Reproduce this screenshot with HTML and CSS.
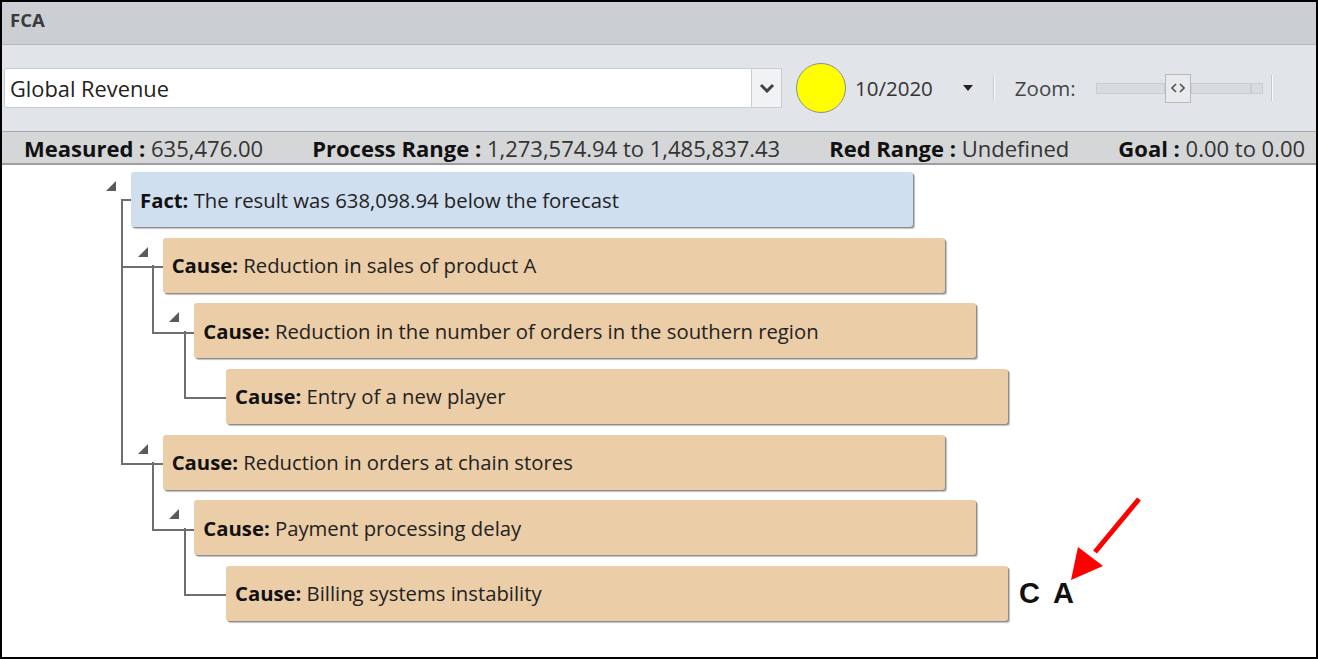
FILE: index.html
```html
<!DOCTYPE html>
<html lang="en">
<head>
    <meta charset="UTF-8">
    <title>FCA</title>
    <link rel="stylesheet" href="styles.css">
</head>
<body>
    <div class="window">
        <div class="titlebar">FCA</div>

        <div class="toolbar">
            <div class="combo">
                <span class="combo-text">Global Revenue</span>
                <span class="combo-btn">
                    <svg width="16" height="10" viewBox="0 0 16 10"><polyline points="2,2 8,8 14,2" fill="none" stroke="#444" stroke-width="3"/></svg>
                </span>
            </div>
            <span class="status-dot"></span>
            <span class="period">10/2020</span>
            <svg class="period-arrow" width="10" height="6" viewBox="0 0 10 6"><polygon points="0,0 10,0 5,6" fill="#222"/></svg>
            <span class="sep"></span>
            <span class="zoom-label">Zoom:</span>
            <div class="slider">
                <span class="track track-left"></span>
                <span class="thumb">
                    <svg width="14" height="10" viewBox="0 0 14 10"><polyline points="5,1 1,5 5,9" fill="none" stroke="#555" stroke-width="1.6"/><polyline points="9,1 13,5 9,9" fill="none" stroke="#555" stroke-width="1.6"/></svg>
                </span>
                <span class="track track-right"></span>
                <span class="track track-end"></span>
            </div>
            <span class="sep"></span>
        </div>

        <div class="stats">
            <span><b>Measured :</b> 635,476.00</span>
            <span><b>Process Range :</b> 1,273,574.94 to 1,485,837.43</span>
            <span><b>Red Range :</b> Undefined</span>
            <span><b>Goal :</b> 0.00 to 0.00</span>
        </div>

        <div class="canvas">
            <ul class="tree">
                <li class="root">
                    <div class="node fact has-kids"><b>Fact:</b>&nbsp;The result was 638,098.94 below the forecast</div>
                    <ul>
                        <li>
                            <div class="node has-kids"><b>Cause:</b>&nbsp;Reduction in sales of product A</div>
                            <ul>
                                <li>
                                    <div class="node has-kids"><b>Cause:</b>&nbsp;Reduction in the number of orders in the southern region</div>
                                    <ul>
                                        <li>
                                            <div class="node"><b>Cause:</b>&nbsp;Entry of a new player</div>
                                        </li>
                                    </ul>
                                </li>
                            </ul>
                        </li>
                        <li>
                            <div class="node has-kids"><b>Cause:</b>&nbsp;Reduction in orders at chain stores</div>
                            <ul>
                                <li>
                                    <div class="node has-kids"><b>Cause:</b>&nbsp;Payment processing delay</div>
                                    <ul>
                                        <li class="row">
                                            <div class="node"><b>Cause:</b>&nbsp;Billing systems instability</div>
                                            <span class="mark">C A</span>
                                        </li>
                                    </ul>
                                </li>
                            </ul>
                        </li>
                    </ul>
                </li>
            </ul>
        </div>

        <!-- annotation arrow pointing at the C A mark -->
        <svg class="arrow" width="90" height="100" viewBox="0 0 90 100">
            <line x1="77" y1="8" x2="33" y2="61" stroke="#ff0000" stroke-width="5"/>
            <polygon points="9,89 16,56 41,75" fill="#ff0000"/>
        </svg>
    </div>
</body>
</html>
```

FILE: styles.css
```css
* {
    box-sizing: border-box;
}
body {
    margin: 0;
    font-family: "Open Sans", "Noto Sans", sans-serif;
    color: #222;
}
.window {
    position: relative;
    width: 1318px;
    height: 659px;
    border: 2px solid #000;
    display: flex;
    flex-direction: column;
    background: #fff;
    overflow: hidden;
}
.titlebar {
    height: 43px;
    background: #cbcfd4;
    border-bottom: 1px solid #b4b8bd;
    padding: 5px 0 0 8px;
    font-weight: bold;
    font-size: 18.5px;
    color: #3b3b3b;
}

/* toolbar */
.toolbar {
    height: 86px;
    background: #e1e4e8;
    display: flex;
    align-items: center;
    padding-left: 2px;
}
.combo {
    display: flex;
    height: 40px;
    width: 778px;
}
.combo-text {
    flex: 1;
    background: #fff;
    border: 1px solid #c8cbcf;
    border-radius: 2px 0 0 2px;
    padding-left: 5px;
    display: flex;
    align-items: center;
    font-size: 21.8px;
    color: #222;
}
.combo-btn {
    width: 30px;
    background: #f1f2f4;
    border: 1px solid #c8cbcf;
    border-left: none;
    display: flex;
    align-items: center;
    justify-content: center;
}
.status-dot {
    width: 50px;
    height: 50px;
    border-radius: 50%;
    background: #ffff00;
    border: 1px solid #8f8f8f;
    margin-left: 14px;
}
.period {
    margin-left: 9px;
    font-size: 20.5px;
    color: #333;
}
.period-arrow {
    margin-left: 30px;
}
.sep {
    width: 2px;
    height: 26px;
    border-left: 1px solid #c6cace;
    border-right: 1px solid #fbfbfc;
    margin-left: 20px;
}
.zoom-label {
    margin-left: 20px;
    font-size: 20.5px;
    color: #444;
}
.slider {
    display: flex;
    align-items: center;
    margin-left: 20px;
}
.track {
    height: 11px;
    background: #d9dcdf;
    border: 1px solid #c9ccd0;
}
.track-left {
    width: 69px;
}
.track-right {
    width: 60px;
}
.track-end {
    width: 12px;
}
.thumb {
    width: 26px;
    height: 29px;
    background: #e8eaec;
    border: 1px solid #b6babe;
    display: flex;
    align-items: center;
    justify-content: center;
}
.slider + .sep {
    margin-left: 8px;
}

/* stats bar */
.stats {
    height: 34px;
    background: #d5d6d7;
    border-top: 1px solid #a5a9ad;
    border-bottom: 2px solid #9c9ea1;
    display: flex;
    align-items: center;
    gap: 49px;
    padding-left: 22px;
    font-size: 22px;
    color: #333;
    white-space: nowrap;
}
.stats b {
    color: #111;
}

/* cause tree */
.canvas {
    flex: 1;
    background: #fff;
}
.tree,
.tree ul {
    list-style: none;
    margin: 0;
    padding: 0;
}
.tree {
    padding-left: 129px;
}
.tree ul {
    padding-left: 31.67px;
}
.tree li {
    position: relative;
    padding-top: 10.67px;
}
.tree li.root {
    padding-top: 7px;
}
.tree ul li::before {
    content: "";
    position: absolute;
    left: -42px;
    top: -27.5px;
    width: 42px;
    height: 66.67px;
    border-left: 2px solid #6e6e6e;
    border-bottom: 2px solid #6e6e6e;
}
.tree ul li:not(:last-child)::after {
    content: "";
    position: absolute;
    left: -42px;
    top: 37px;
    bottom: 0;
    border-left: 2px solid #6e6e6e;
}
.row {
    display: flex;
    align-items: center;
}
.node {
    position: relative;
    width: 782px;
    height: 55px;
    background: #ebcda7;
    border-radius: 3px;
    box-shadow: 1px 1px 0 #8e8e8e, 2px 2px 1px rgba(0, 0, 0, 0.25);
    display: flex;
    align-items: center;
    padding-left: 9px;
    font-size: 20.3px;
    color: #222;
    white-space: nowrap;
}
.node b {
    color: #111;
}
.node.fact {
    background: #cfdff0;
}
.root > .node::before {
    content: "";
    position: absolute;
    left: -10px;
    top: 26.5px;
    width: 10px;
    height: 2px;
    background: #6e6e6e;
}
.has-kids::after {
    content: "";
    position: absolute;
    left: -25px;
    top: 9px;
    width: 0;
    height: 0;
    border-left: 10px solid transparent;
    border-bottom: 10px solid #5a5a5a;
}
.mark {
    margin-left: 11px;
    font-family: "Liberation Sans", Arial, sans-serif;
    font-weight: bold;
    font-size: 29px;
    letter-spacing: 3px;
    color: #111;
}
.arrow {
    position: absolute;
    left: 1060px;
    top: 489px;
}
```
